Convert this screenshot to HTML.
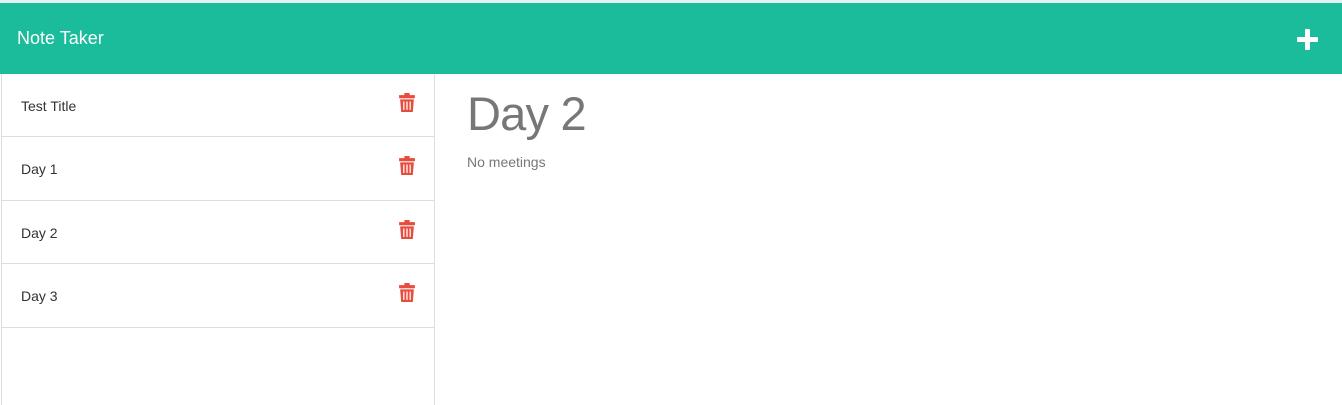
<!DOCTYPE html><html><head><style>
body{margin:0;width:1342px;height:405px;overflow:hidden;background:#fff;font-family:"Liberation Sans",sans-serif}
.top{height:3px;background:#e6f2f0}
.hdr{height:71px;background:#1abc9c;position:relative}
.hdr .t{position:absolute;left:17px;top:25px;color:#fff;font-size:18px}
.plus{position:absolute;left:1297px;top:26px;width:21px;height:21px}
.plus:before{content:"";position:absolute;left:0;top:8px;width:21px;height:5px;background:#fff;border-radius:1px}
.plus:after{content:"";position:absolute;left:8px;top:0;width:5px;height:21px;background:#fff;border-radius:1px}
.left{position:absolute;left:1px;top:74px;width:432px;height:331px;border-right:1px solid #ddd;border-left:1px solid #ddd}
.it{height:62px;border-bottom:1px solid #ddd;position:relative;font-size:14px;color:#333}
.it.b{height:63px}
.it span{position:absolute;left:19px;top:24px}
.it svg{position:absolute;left:397px;top:19px}
.main{position:absolute;left:467px;top:86px;color:#777}
h1{margin:0;font-weight:normal;font-size:47px;letter-spacing:-.8px}
p{margin:13px 0 0;font-size:14px}
</style></head><body>
<div class="top"></div>
<div class="hdr"><div class="t">Note Taker</div><div class="plus"></div></div>
<div class="left">
<div class="it"><span>Test Title</span><svg width="16" height="19" viewBox="0 0 15 18"><rect x="0" y="2" width="15" height="3" fill="#e74c3c"/><rect x="5" y="0" width="5" height="3" fill="#e74c3c"/><path d="M1 6h13l-1 12H2z" fill="#e74c3c"/><path d="M4.5 8v8M7.5 8v8M10.5 8v8" stroke="#fff" stroke-width="1.2"/></svg></div>
<div class="it b"><span>Day 1</span><svg width="16" height="19" viewBox="0 0 15 18"><rect x="0" y="2" width="15" height="3" fill="#e74c3c"/><rect x="5" y="0" width="5" height="3" fill="#e74c3c"/><path d="M1 6h13l-1 12H2z" fill="#e74c3c"/><path d="M4.5 8v8M7.5 8v8M10.5 8v8" stroke="#fff" stroke-width="1.2"/></svg></div>
<div class="it"><span>Day 2</span><svg width="16" height="19" viewBox="0 0 15 18"><rect x="0" y="2" width="15" height="3" fill="#e74c3c"/><rect x="5" y="0" width="5" height="3" fill="#e74c3c"/><path d="M1 6h13l-1 12H2z" fill="#e74c3c"/><path d="M4.5 8v8M7.5 8v8M10.5 8v8" stroke="#fff" stroke-width="1.2"/></svg></div>
<div class="it b"><span>Day 3</span><svg width="16" height="19" viewBox="0 0 15 18"><rect x="0" y="2" width="15" height="3" fill="#e74c3c"/><rect x="5" y="0" width="5" height="3" fill="#e74c3c"/><path d="M1 6h13l-1 12H2z" fill="#e74c3c"/><path d="M4.5 8v8M7.5 8v8M10.5 8v8" stroke="#fff" stroke-width="1.2"/></svg></div>
</div>
<div class="main"><h1>Day 2</h1><p>No meetings</p></div>
</body></html>
